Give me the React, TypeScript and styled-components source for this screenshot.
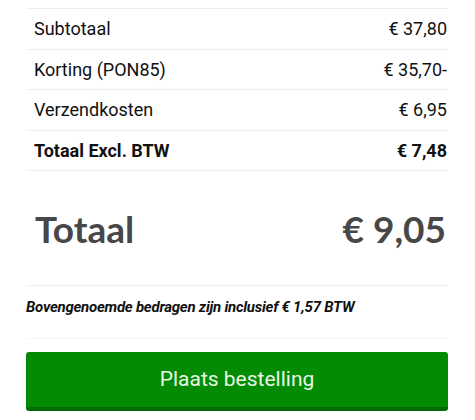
import React from "react";
import styled, { createGlobalStyle } from "styled-components";

const Global = createGlobalStyle`
  html, body { margin: 0; padding: 0; background: #ffffff; }
  body { font-family: Roboto, "Noto Sans", sans-serif; }
`;

const Page = styled.div`
  padding: 8px 27px 0 26px;
  background: #ffffff;
`;

const Summary = styled.div`
  display: flex;
  flex-direction: column;
  border-top: 1px solid #eeeeee;
`;

const Row = styled.div<{ $bold?: boolean }>`
  display: flex;
  align-items: center;
  justify-content: space-between;
  height: 39.5px;
  border-bottom: 1px solid #eeeeee;
  padding: 0 1px 0 8px;
  font-family: Roboto, sans-serif;
  font-size: 18px;
  font-weight: ${(p) => (p.$bold ? 700 : 400)};
  color: #111111;
`;

const TotalBlock = styled.div`
  display: flex;
  align-items: center;
  justify-content: space-between;
  height: 114px;
  padding: 0 2px 0 9px;
  border-bottom: 1px solid #eeeeee;
  font-family: Lato, sans-serif;
  font-weight: 700;
  font-size: 37px;
  color: #474747;
`;

const Note = styled.p`
  margin: 0;
  padding: 12px 0 0 0;
  height: 53px;
  box-sizing: border-box;
  font-family: Roboto, sans-serif;
  font-style: italic;
  font-weight: 700;
  font-size: 15px;
  letter-spacing: -0.25px;
  color: #111111;
  border-bottom: 1px solid #f6f6f6;
`;

const ButtonWrap = styled.div`
  padding-top: 13px;
`;

const OrderButton = styled.button`
  display: flex;
  align-items: center;
  justify-content: center;
  width: 100%;
  height: 59px;
  margin: 0;
  padding: 0 0 2px 0;
  border: none;
  border-bottom: 4px solid #036b03;
  border-radius: 3px;
  background: #048b04;
  color: #e6f6e4;
  font-family: Roboto, sans-serif;
  font-size: 21px;
  font-weight: 400;
  cursor: pointer;
`;

const rows = [
  { label: "Subtotaal", value: "€ 37,80" },
  { label: "Korting (PON85)", value: "€ 35,70-" },
  { label: "Verzendkosten", value: "€ 6,95" },
  { label: "Totaal Excl. BTW", value: "€ 7,48", bold: true },
];

export default function App() {
  return (
    <>
      <Global />
      <Page>
        <Summary>
          {rows.map((r) => (
            <Row key={r.label} $bold={r.bold}>
              <span>{r.label}</span>
              <span>{r.value}</span>
            </Row>
          ))}
        </Summary>
        <TotalBlock>
          <span>Totaal</span>
          <span>€ 9,05</span>
        </TotalBlock>
        <Note>Bovengenoemde bedragen zijn inclusief € 1,57 BTW</Note>
        <ButtonWrap>
          <OrderButton>Plaats bestelling</OrderButton>
        </ButtonWrap>
      </Page>
    </>
  );
}
